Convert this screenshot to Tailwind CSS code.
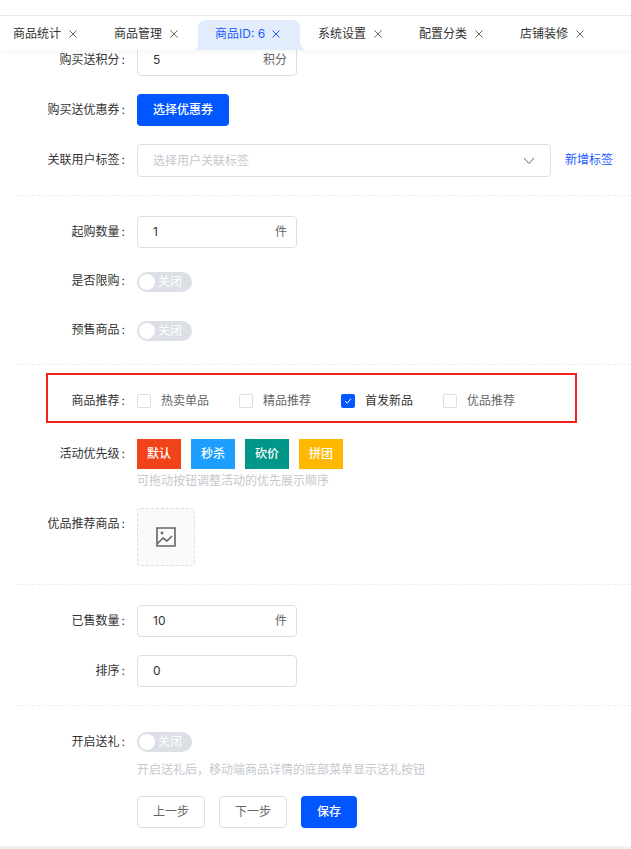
<!DOCTYPE html>
<html lang="zh-CN">
<head>
  <meta charset="UTF-8" />
  <title>商品ID: 6</title>
  <script src="https://cdn.jsdelivr.net/npm/@tailwindcss/browser@4"></script>
</head>
<body class="bg-[#f0f0f5] font-['Inter','Noto_Sans_CJK_SC',sans-serif] text-xs text-[#333]">
  <div class="w-[631px] h-[849px] overflow-hidden">
    <div class="h-[846px] bg-white overflow-hidden">
      <div class="h-[15px]"></div>

      <!-- tabs -->
      <div class="relative z-10 h-[35px] bg-white border-t border-[#e8e8f4] shadow-[0_2px_6px_rgba(0,0,0,0.04)] flex">
        <div class="w-[101px] pl-[13px] pt-[2px] flex items-center gap-[8px]"><span>商品统计</span>
          <svg class="w-[8px] h-[8px]" viewBox="0 0 8 8" fill="none" stroke="#666" stroke-width="1"><path d="M0.5 0.5l7 7M7.5 0.5l-7 7"/></svg></div>
        <div class="w-[101px] pl-[13px] pt-[2px] flex items-center gap-[8px]"><span>商品管理</span>
          <svg class="w-[8px] h-[8px]" viewBox="0 0 8 8" fill="none" stroke="#666" stroke-width="1"><path d="M0.5 0.5l7 7M7.5 0.5l-7 7"/></svg></div>
        <div class="relative w-[103px] pl-[13px] pt-[2px] flex items-center gap-[7px] text-[#1a5cff]">
          <svg class="absolute left-[-7px] top-[4px] w-[110px] h-[30px]" viewBox="0 0 110 30"><path d="M0 30C3 28 3 25 3 20V8C3 3 6 0 11 0H97C103 0 105 3 105 8V20C105 25 107 28 110 30Z" fill="#e3ecfd"/></svg>
          <span class="relative">商品ID: 6</span>
          <svg class="relative w-[8px] h-[8px]" viewBox="0 0 8 8" fill="none" stroke="#1a5cff" stroke-width="1"><path d="M0.5 0.5l7 7M7.5 0.5l-7 7"/></svg></div>
        <div class="w-[101px] pl-[13px] pt-[2px] flex items-center gap-[8px]"><span>系统设置</span>
          <svg class="w-[8px] h-[8px]" viewBox="0 0 8 8" fill="none" stroke="#666" stroke-width="1"><path d="M0.5 0.5l7 7M7.5 0.5l-7 7"/></svg></div>
        <div class="w-[101px] pl-[13px] pt-[2px] flex items-center gap-[8px]"><span>配置分类</span>
          <svg class="w-[8px] h-[8px]" viewBox="0 0 8 8" fill="none" stroke="#666" stroke-width="1"><path d="M0.5 0.5l7 7M7.5 0.5l-7 7"/></svg></div>
        <div class="w-[101px] pl-[13px] pt-[2px] flex items-center gap-[8px]"><span>店铺装修</span>
          <svg class="w-[8px] h-[8px]" viewBox="0 0 8 8" fill="none" stroke="#666" stroke-width="1"><path d="M0.5 0.5l7 7M7.5 0.5l-7 7"/></svg></div>
      </div>

      <!-- form -->
      <div class="-mt-[6px]">
        <div class="flex items-center h-[32px]">
          <label class="w-[125px] text-right mr-[12px]">购买送积分<i class="not-italic ml-[2px]">:</i></label>
          <div class="w-[160px] h-[32px] border border-[#dddde8] rounded flex items-center justify-between pl-[15px] pr-[9px]"><span>5</span><span class="text-[#666]">积分</span></div>
        </div>
        <div class="flex items-center h-[32px] mt-[18px]">
          <label class="w-[125px] text-right mr-[12px]">购买送优惠券<i class="not-italic ml-[2px]">:</i></label>
          <button class="w-[92px] h-[32px] bg-[#0256ff] text-white font-medium rounded">选择优惠券</button>
        </div>
        <div class="flex items-center h-[32px] mt-[18px]">
          <label class="w-[125px] text-right mr-[12px]">关联用户标签<i class="not-italic ml-[2px]">:</i></label>
          <div class="self-start w-[414px] h-[33px] border border-[#dddde8] rounded flex items-center justify-between pl-[15px] pr-[15px] text-[#c5c8ce]"><span>选择用户关联标签</span>
            <svg class="w-[12px] h-[8px]" viewBox="0 0 12 8" fill="none" stroke="#666" stroke-width="1"><path d="M1 1l5 5.5L11 1"/></svg></div>
          <a class="ml-[14px] text-[#1a5cff]">新增标签</a>
        </div>
        <div class="ml-[17px] mt-[19px] border-t border-dashed border-[#eeeeee]"></div>

        <div class="flex items-center h-[32px] mt-[20px]">
          <label class="w-[125px] text-right mr-[12px]">起购数量<i class="not-italic ml-[2px]">:</i></label>
          <div class="w-[160px] h-[32px] border border-[#dddde8] rounded flex items-center justify-between pl-[15px] pr-[9px]"><span>1</span><span class="text-[#666]">件</span></div>
        </div>
        <div class="flex items-center h-[32px] mt-[17px]">
          <label class="w-[125px] text-right mr-[12px]">是否限购<i class="not-italic ml-[2px]">:</i></label>
          <div class="mt-[2px] w-[55px] h-[20px] rounded-full bg-[#dcdfe6] flex items-center pl-[2px] gap-[3px] text-white"><span class="w-[16px] h-[16px] rounded-full bg-white"></span><span>关闭</span></div>
        </div>
        <div class="flex items-center h-[32px] mt-[17px]">
          <label class="w-[125px] text-right mr-[12px]">预售商品<i class="not-italic ml-[2px]">:</i></label>
          <div class="mt-[2px] w-[55px] h-[20px] rounded-full bg-[#dcdfe6] flex items-center pl-[2px] gap-[3px] text-white"><span class="w-[16px] h-[16px] rounded-full bg-white"></span><span>关闭</span></div>
        </div>
        <div class="ml-[17px] mt-[18px] border-t border-dashed border-[#eeeeee]"></div>

        <div class="ml-[46px] w-[531px] h-[50px] mt-[8px] pt-[5px] border-2 border-[#f5221b] flex items-center">
          <label class="w-[77px] text-right mr-[12px] shrink-0">商品推荐<i class="not-italic ml-[2px]">:</i></label>
          <div class="flex items-center text-[#666]">
            <span class="w-[14px] h-[14px] border border-[#dddde8] rounded-[2px] mr-[10px]"></span><span class="w-[48px] mr-[30px]">热卖单品</span>
            <span class="w-[14px] h-[14px] border border-[#dddde8] rounded-[2px] mr-[10px]"></span><span class="w-[48px] mr-[30px]">精品推荐</span>
            <span class="w-[14px] h-[14px] rounded-[2px] mr-[10px] bg-[#0256ff] flex items-center justify-center"><svg class="w-[10px] h-[10px]" viewBox="0 0 10 10" fill="none" stroke="#fff" stroke-width="1"><path d="M2 5l2.2 2.3L8 2.6"/></svg></span><span class="w-[48px] mr-[30px] text-[#333]">首发新品</span>
            <span class="w-[14px] h-[14px] border border-[#dddde8] rounded-[2px] mr-[10px]"></span><span class="w-[48px]">优品推荐</span>
          </div>
        </div>

        <div class="flex mt-[16px]">
          <label class="w-[125px] text-right mr-[12px] leading-[30px]">活动优先级<i class="not-italic ml-[2px]">:</i></label>
          <div>
            <div class="flex gap-[10px] text-white font-medium">
              <span class="w-[44px] h-[30px] bg-[#f1431a] flex items-center justify-center">默认</span>
              <span class="w-[44px] h-[30px] bg-[#1e9fff] flex items-center justify-center">秒杀</span>
              <span class="w-[44px] h-[30px] bg-[#009688] flex items-center justify-center">砍价</span>
              <span class="w-[44px] h-[30px] bg-[#ffb800] flex items-center justify-center">拼团</span>
            </div>
            <div class="mt-[3px] leading-[18px] text-[#c5c8ce]">可拖动按钮调整活动的优先展示顺序</div>
          </div>
        </div>
        <div class="flex mt-[18px]">
          <label class="w-[125px] text-right mr-[12px] leading-[32px]">优品推荐商品<i class="not-italic ml-[2px]">:</i></label>
          <div class="w-[58px] h-[58px] bg-[#fafafa] border border-dashed border-[#dddddd] rounded flex items-center justify-center">
            <svg class="w-[20px] h-[20px]" viewBox="0 0 20 20" fill="none" stroke="#666" stroke-width="1.6"><path d="M1 1h18v18H1z"/><path d="M1 17l6-6 4 3 5-5"/><circle cx="6" cy="6" r="1.4" fill="#666" stroke="none"/></svg>
          </div>
        </div>
        <div class="ml-[17px] mt-[18px] border-t border-dashed border-[#eeeeee]"></div>

        <div class="flex items-center h-[32px] mt-[20px]">
          <label class="w-[125px] text-right mr-[12px]">已售数量<i class="not-italic ml-[2px]">:</i></label>
          <div class="w-[160px] h-[32px] border border-[#dddde8] rounded flex items-center justify-between pl-[15px] pr-[9px]"><span>10</span><span class="text-[#666]">件</span></div>
        </div>
        <div class="flex items-center h-[32px] mt-[18px]">
          <label class="w-[125px] text-right mr-[12px]">排序<i class="not-italic ml-[2px]">:</i></label>
          <div class="w-[160px] h-[32px] border border-[#dddde8] rounded flex items-center pl-[15px]"><span>0</span></div>
        </div>
        <div class="ml-[17px] mt-[18px] border-t border-dashed border-[#eeeeee]"></div>

        <div class="flex items-center h-[20px] mt-[26px]">
          <label class="w-[125px] text-right mr-[12px]">开启送礼<i class="not-italic ml-[2px]">:</i></label>
          <div class="w-[55px] h-[20px] rounded-full bg-[#dcdfe6] flex items-center pl-[2px] gap-[3px] text-white"><span class="w-[16px] h-[16px] rounded-full bg-white"></span><span>关闭</span></div>
        </div>
        <div class="ml-[137px] mt-[9px] leading-[18px] text-[#c5c8ce]">开启送礼后，移动端商品详情的底部菜单显示送礼按钮</div>
        <div class="ml-[137px] mt-[17px] flex gap-[14px]">
          <button class="w-[68px] h-[32px] border border-[#dddde8] rounded text-[#666]">上一步</button>
          <button class="w-[68px] h-[32px] border border-[#dddde8] rounded text-[#666]">下一步</button>
          <button class="w-[56px] h-[32px] bg-[#0256ff] text-white font-medium rounded">保存</button>
        </div>
      </div>
    </div>
  </div>
</body>
</html>
